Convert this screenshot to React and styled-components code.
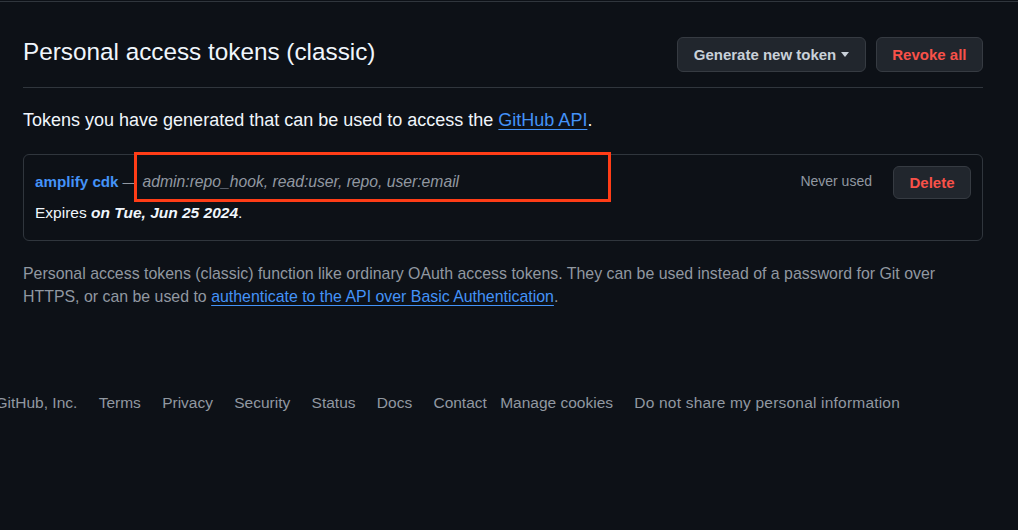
import React from "react";
import styled, { createGlobalStyle } from "styled-components";

const GlobalStyle = createGlobalStyle`
  html, body {
    margin: 0;
    padding: 0;
    background: #0d1117;
  }
  body {
    font-family: "Liberation Sans", Arial, sans-serif;
    color: #f0f6fc;
    overflow: hidden;
  }
`;

const Page = styled.div`
  margin-top: 1px;
  border-top: 1px solid #30363d;
  min-height: 528px;
`;

const Main = styled.main`
  width: 960px;
  margin-left: 23px;
`;

const Header = styled.div`
  display: flex;
  align-items: flex-start;
  justify-content: space-between;
  padding: 35px 0 15px;
  border-bottom: 1px solid #30363d;
`;

const Title = styled.h2`
  margin: 0;
  font-size: 24.3px;
  font-weight: 400;
  line-height: 30px;
  color: #f0f6fc;
`;

const Actions = styled.div`
  display: flex;
  gap: 10px;
`;

const Button = styled.button`
  display: inline-flex;
  align-items: center;
  gap: 5px;
  height: ${(p) => (p.small ? "33px" : "35px")};
  padding: 0 15.5px;
  border: 1px solid #363b42;
  border-radius: 6px;
  background: #21262d;
  color: ${(p) => (p.danger ? "#f85149" : "#c9d1d9")};
  font-family: inherit;
  font-size: 15px;
  font-weight: 700;
  cursor: pointer;
`;

const Caret = styled.span`
  width: 0;
  height: 0;
  border-left: 4.5px solid transparent;
  border-right: 4.5px solid transparent;
  border-top: 5px solid #c9d1d9;
`;

const Intro = styled.p`
  margin: 19px 0 0;
  font-size: 18px;
  line-height: 27px;
  color: #f0f6fc;
`;

const Link = styled.a`
  color: #4493f8;
  text-decoration: underline;
  text-underline-offset: 3px;
  text-decoration-thickness: 1px;
`;

const Card = styled.div`
  position: relative;
  display: flex;
  margin-top: 20px;
  padding: 11px 11px 16px;
  border: 1px solid #30363d;
  border-radius: 6px;
`;

const TokenInfo = styled.div`
  flex: 1;
  padding-top: 5px;
`;

const TokenLine = styled.div`
  font-size: 15.5px;
  line-height: 22px;
  margin-top: ${(p) => (p.second ? "8px" : "0")};
`;

const TokenName = styled.strong`
  color: #4493f8;
  font-size: 15.2px;
  font-weight: 700;
`;

const Dash = styled.span`
  color: #9198a1;
  font-size: 12px;
  margin: 0 8px 0 4px;
`;

const Scopes = styled.em`
  color: #9198a1;
  font-size: 15.7px;
`;

const Date = styled.em`
  font-weight: 700;
`;

const TokenMeta = styled.div`
  display: flex;
  align-items: flex-start;
  gap: 21px;
`;

const LastUsed = styled.span`
  margin-top: 7px;
  font-size: 14px;
  color: #9198a1;
`;

const Highlight = styled.div`
  position: absolute;
  left: 110px;
  top: -3px;
  width: 471px;
  height: 44px;
  border: 3px solid #ff3d17;
  pointer-events: none;
`;

const Note = styled.p`
  margin: 21px 0 0;
  font-size: 15.9px;
  line-height: 23px;
  color: #9198a1;
`;

const Footer = styled.ul`
  display: flex;
  list-style: none;
  margin: 84px 0 0 -4.5px;
  padding: 0;
  gap: 21.3px;
`;

const FooterItem = styled.li`
  font-size: 15.5px;
  line-height: 22px;
  color: #9198a1;
  margin-left: ${(p) => (p.tight ? "-8px" : "0")};
  letter-spacing: ${(p) => (p.wide ? "0.2px" : "0")};
`;

const footerLinks = [
  "GitHub, Inc.",
  "Terms",
  "Privacy",
  "Security",
  "Status",
  "Docs",
  "Contact",
];

export default function App() {
  return (
    <>
      <GlobalStyle />
      <Page>
        <Main>
          <Header>
            <Title>Personal access tokens (classic)</Title>
            <Actions>
              <Button>
                Generate new token
                <Caret />
              </Button>
              <Button danger>Revoke all</Button>
            </Actions>
          </Header>

          <Intro>
            Tokens you have generated that can be used to access the{" "}
            <Link href="#">GitHub API</Link>.
          </Intro>

          <Card>
            <TokenInfo>
              <TokenLine>
                <TokenName>amplify cdk</TokenName>
                <Dash>—</Dash>
                <Scopes>admin:repo_hook, read:user, repo, user:email</Scopes>
              </TokenLine>
              <TokenLine second>
                Expires <Date>on Tue, Jun 25 2024</Date>.
              </TokenLine>
            </TokenInfo>
            <TokenMeta>
              <LastUsed>Never used</LastUsed>
              <Button danger small>Delete</Button>
            </TokenMeta>
            <Highlight />
          </Card>

          <Note>
            Personal access tokens (classic) function like ordinary OAuth access
            tokens. They can be used instead of a password for Git over HTTPS,
            or can be used to{" "}
            <Link href="#">authenticate to the API over Basic Authentication</Link>.
          </Note>
        </Main>

        <Footer>
          {footerLinks.map((label) => (
            <FooterItem key={label}>{label}</FooterItem>
          ))}
          <FooterItem tight>Manage cookies</FooterItem>
          <FooterItem wide>Do not share my personal information</FooterItem>
        </Footer>
      </Page>
    </>
  );
}
